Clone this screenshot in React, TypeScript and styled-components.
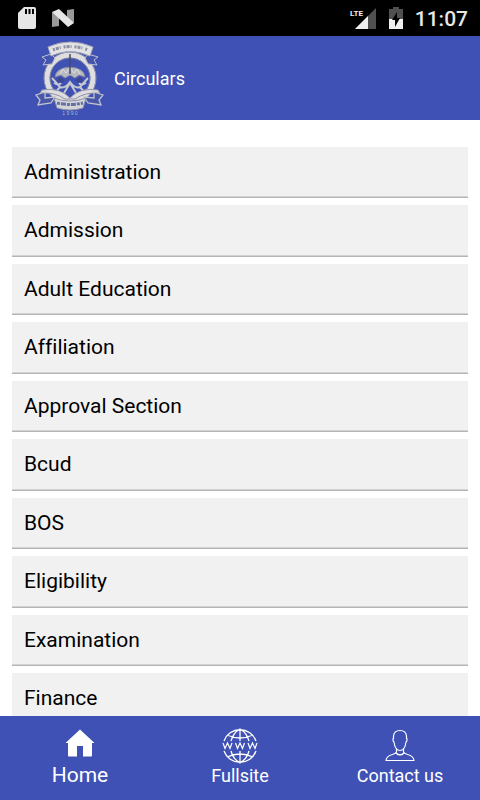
import React from "react";
import styled, { createGlobalStyle } from "styled-components";

const GlobalStyle = createGlobalStyle`
  * { box-sizing: border-box; }
  body {
    margin: 0;
    background: #fff;
    font-family: Roboto, "Liberation Sans", sans-serif;
    font-variant-ligatures: none;
  }
`;

const Screen = styled.div`
  display: flex;
  flex-direction: column;
  height: 100vh;
  overflow: hidden;
`;

const StatusBar = styled.div`
  display: flex;
  flex: none;
  justify-content: space-between;
  height: 36px;
  padding: 0 12px 0 18px;
  background: #000;
  color: #e6e6e6;
`;

const StatusGroup = styled.div<{ $gap: number }>`
  display: flex;
  align-items: center;
  gap: ${(p) => p.$gap}px;
  svg { display: block; }
`;

const Clock = styled.time`
  font-size: 21px;
  font-weight: 500;
  line-height: 36px;
  padding-top: 2px;
`;

const Header = styled.header`
  display: flex;
  flex: none;
  align-items: center;
  gap: 10px;
  height: 84px;
  padding: 0 34px;
  background: #3f51b5;
  color: #fff;
`;

const Title = styled.h1`
  margin: 0;
  padding-top: 2px;
  font-size: 18px;
  font-weight: 400;
  line-height: 24px;
`;

const Content = styled.main`
  flex: 1;
  min-height: 0;
  overflow-y: auto;
  scrollbar-width: none;
  padding: 27px 12px 0;
`;

const List = styled.ul`
  display: flex;
  flex-direction: column;
  gap: 7px;
  margin: 0;
  padding: 0;
  list-style: none;
`;

const Item = styled.li`
  height: 51px;
  &:nth-child(even) { height: 52px; }
`;

const ItemButton = styled.button`
  display: flex;
  align-items: flex-start;
  width: 100%;
  height: 100%;
  padding: 13px 12px 0;
  border: 0;
  border-bottom: 1px solid #b5b5b5;
  box-shadow: inset 0 -1px #d2d2d2;
  background: #f1f1f1;
  color: #000;
  font-family: inherit;
  font-size: 21px;
  font-weight: 400;
  font-variant-ligatures: none;
  line-height: 24px;
  text-align: left;
`;

const NavBar = styled.nav`
  display: grid;
  grid-template-columns: repeat(3, 1fr);
  flex: none;
  height: 84px;
  background: #3f51b5;
`;

const NavLink = styled.a<{ $active?: boolean }>`
  display: flex;
  flex-direction: column;
  align-items: center;
  padding-top: 12px;
  color: #fff;
  font-size: ${(p) => (p.$active ? 21 : 18)}px;
  line-height: ${(p) => (p.$active ? 22 : 24)}px;
  text-decoration: none;
  svg { display: block; }
`;

const SdCardIcon = () => (
  <svg width="18" height="22" viewBox="0 0 18 22" aria-hidden="true">
    <path d="M6 0h10a2 2 0 0 1 2 2v18a2 2 0 0 1-2 2H2a2 2 0 0 1-2-2V6z" fill="#e6e6e6" />
    <path d="M7 2h2v5H7zM10.500 2h2v5h-2zM14 2h2v5h-2z" fill="#000" />
  </svg>
);

const NougatIcon = () => (
  <svg width="22" height="18" viewBox="0 0 22 18" aria-hidden="true">
    <path d="M0 3l7 4v10l-7 1zM15 1l7-1v14l-7-4z" fill="#999" />
    <path d="M0 3L7 0l15 14-6 4z" fill="#e6e6e6" />
  </svg>
);

const SignalIcon = () => (
  <svg width="27" height="22" viewBox="0 0 27 22" aria-hidden="true">
    <path d="M26 1v21H5z" fill="#505050" />
    <path d="M18 9v13H5z" fill="#f0f0f0" />
    <text x="0" y="9" fontFamily="Roboto, sans-serif" fontSize="8" fontWeight="700" fill="#f0f0f0">LTE</text>
  </svg>
);

const BatteryIcon = () => (
  <svg width="14" height="22" viewBox="0 0 14 22" aria-hidden="true">
    <path d="M4 0h6v2h4v10H0V2h4z" fill="#505050" />
    <path d="M0 12h14v10H0z" fill="#f0f0f0" />
    <path d="M8 5v6h3l-5 9v-7H3z" fill="#000" />
  </svg>
);

const UniversityCrest = () => (
  <svg width="70" height="76" viewBox="0 0 70 76" role="img" aria-label="University crest">
    <circle cx="36" cy="38" r="23" fill="none" stroke="#dedee0" strokeWidth="5.500" />
    <circle cx="36" cy="38" r="26" fill="none" stroke="#9497ab" strokeWidth="1" />
    <circle cx="36" cy="38" r="20" fill="none" stroke="#8386a0" strokeWidth="1" />
    <path d="M17 14L8 17l4 3-3 5 9-1 3-6zM54 14l10 3-4 3 3 5-9-1-3-6z" fill="#4555ae" stroke="#bfc1cc" strokeWidth="1" />
    <path d="M14 7Q36-3 59 7l-3 9Q36 7 17 16z" fill="#e3e3e5" stroke="#a5a8b9" />
    <path d="M19 10Q36 3 54 10" fill="none" stroke="#8b8e9f" strokeWidth="3" strokeDasharray="2 1 3 1 1 3" />
    <path d="M21 37q1-9 15-10 14 1 15 10l-6-2-4 3-5-3-5 3-4-3z" fill="#b8bac2" stroke="#898ca0" />
    <path d="M26 34l3-5 3 4 4-5 4 5 3-4 3 5" fill="none" stroke="#dedee2" />
    <path d="M36 14v20" stroke="#454a65" strokeWidth="1.500" />
    <path d="M18 38l8 9-5 6M54 38l-8 9 5 6M26 47q5 2 10-5 5 7 10 5M30 53l6-10 6 10M20 43q5 3 7 0M52 43q-5 3-7 0" fill="none" stroke="#c6c8d0" strokeWidth="2" />
    <path d="M25 37q3 1 6 3l-3 3-5-2zM47 37q-3 1-6 3l3 3 5-2z" fill="#3c4890" />
    <path d="M8 50q18-3 28 8 10-11 28-8l2 3q-15-1-25 6H31q-10-7-25-6z" fill="#dedee1" stroke="#9092a6" />
    <path d="M11 52l-9 3 4 5-2 5 13-2 4-6-10 1zM60 52l9 3-4 5 2 5-13-2-4-6 10 1z" fill="#4957a9" stroke="#c3c4cd" strokeWidth="1.300" />
    <path d="M20 58q16 6 32 0l-3 10q-13 4-26 0z" fill="#d4d5db" stroke="#9295a8" />
    <path d="M23 63q13 3 26 0" fill="none" stroke="#67709f" strokeWidth="3" strokeDasharray="3 1 5 1" />
    <text x="36" y="75" fontFamily="Liberation Sans, sans-serif" fontSize="5" textAnchor="middle" fill="#b0b5d1">1 9 9 0</text>
  </svg>
);

const HomeIcon = () => (
  <svg width="36" height="36" viewBox="0 0 36 36" aria-hidden="true">
    <path d="M18 1.500L32.500 15H30v12.500q0 1-1 1h-8V18h-6v10.500H7q-1 0-1-1V15H3.500z" fill="#fff" />
  </svg>
);

const WebIcon = () => (
  <svg width="36" height="36" viewBox="0 0 36 36" fill="none" stroke="#fff" strokeWidth="1.300" aria-hidden="true">
    <path d="M2 13a17 17 0 0 1 32 0M2 23a17 17 0 0 0 32 0M18 1v12M18 23v12M9 13Q11 5 18 1q7 4 9 12M9 23q2 8 9 12 7-4 9-12M5 7q13 6 26 0M5 29q13-6 26 0" />
    <path d="M1 15l2 5.500L5.500 15l2.500 5.500L10 15M13.500 15l2 5.500L18 15l2.500 5.500 2-5.500M26 15l2 5.500 2.500-5.500 2.500 5.500L35 15" strokeWidth="1.200" />
  </svg>
);

const ContactIcon = () => (
  <svg width="36" height="36" viewBox="0 0 36 36" fill="none" stroke="#fff" strokeWidth="1.200" strokeLinejoin="round" aria-hidden="true">
    <path d="M11.500 10.500V8Q12 2.500 18 2.500T24.500 8v2.500c1 0 .5 3-.5 3.500-.5 5-3 8.500-6 8.500s-5.500-3.500-6-8.500c-1-.5-1.500-3.500-.5-3.500z" />
    <path d="M14.500 20v4q-1 1.500-4 2.500-6 1.500-6.500 6h28q-.5-4.500-6.500-6-3-1-4-2.500v-4M14 25q4 4 8 0" />
  </svg>
);

const sections = [
  "Administration",
  "Admission",
  "Adult Education",
  "Affiliation",
  "Approval Section",
  "Bcud",
  "BOS",
  "Eligibility",
  "Examination",
  "Finance",
];

export default function App() {
  return (
    <>
      <GlobalStyle />
      <Screen>
        <StatusBar>
          <StatusGroup $gap={16}>
            <SdCardIcon />
            <NougatIcon />
          </StatusGroup>
          <StatusGroup $gap={12}>
            <SignalIcon />
            <BatteryIcon />
            <Clock>11:07</Clock>
          </StatusGroup>
        </StatusBar>
        <Header>
          <UniversityCrest />
          <Title>Circulars</Title>
        </Header>
        <Content>
          <List>
            {sections.map((name) => (
              <Item key={name}>
                <ItemButton type="button">{name}</ItemButton>
              </Item>
            ))}
          </List>
        </Content>
        <NavBar>
          <NavLink href="#home" $active>
            <HomeIcon />
            Home
          </NavLink>
          <NavLink href="#fullsite">
            <WebIcon />
            Fullsite
          </NavLink>
          <NavLink href="#contact">
            <ContactIcon />
            Contact us
          </NavLink>
        </NavBar>
      </Screen>
    </>
  );
}
